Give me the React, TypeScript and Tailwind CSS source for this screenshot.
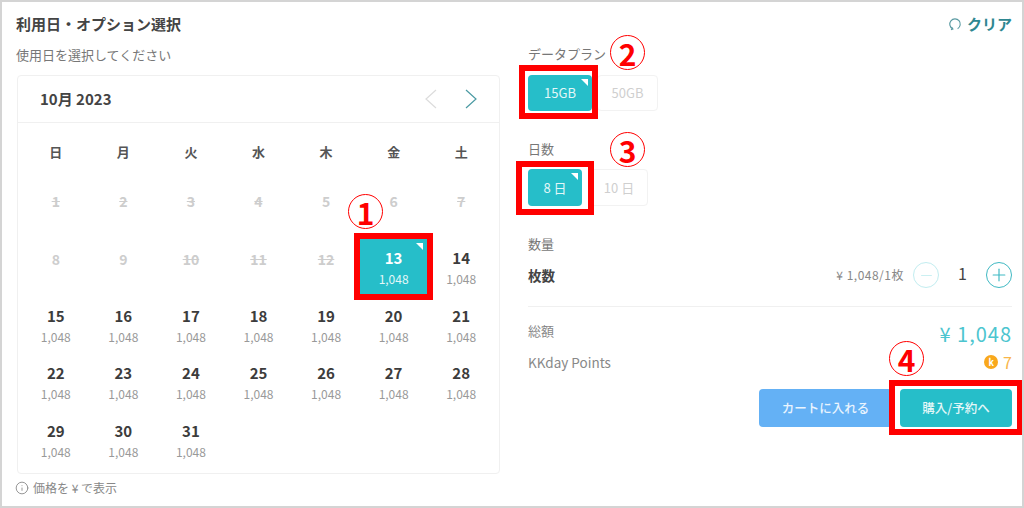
import React from 'react';
import { Info, Minus, Plus } from 'lucide-react';

const weekdays = ['日', '月', '火', '水', '木', '金', '土'];
const disabled = [1, 2, 3, 4, 5, 6, 7, 8, 9, 10, 11, 12];
const strikeDays = [1, 2, 3, 4, 7, 10, 11, 12];
const days = Array.from({ length: 19 }, (_, i) => i + 13);

const Corner = () => (
  <span className="absolute top-[4px] right-[4px] w-0 h-0 border-l-[7px] border-l-transparent border-t-[7px] border-t-white" />
);

const Marker: React.FC<{ n: number; className: string }> = ({ n, className }) => (
  <span className={`absolute w-[35px] h-[35px] rounded-full border border-[#f00] flex items-center justify-center text-[30px] font-bold text-[#f00] leading-none ${className}`}>
    {n}
  </span>
);

const RedBox: React.FC<{ className: string }> = ({ className }) => (
  <span className={`absolute border-[6px] border-[#f00] ${className}`} />
);

const Option: React.FC<{ label: string; active?: boolean; className: string }> = ({ label, active, className }) => (
  <div className={`relative rounded flex items-center justify-center text-[13px] ${active ? 'bg-[#26bec9] text-[#e3f7f8]' : 'border border-[#f2f2f2] text-[#cfcfcf]'} ${className}`}>
    {label}
    {active && <Corner />}
  </div>
);

export default function App() {
  return (
    <div className="relative w-[1024px] h-[508px] overflow-hidden bg-white border-2 border-[#d4d4d4] text-[#3c3c3c] font-['Noto_Sans_CJK_JP','Noto_Sans',sans-serif]">
      <div className="flex pl-[14px] pr-[10px]">
        {/* left: calendar */}
        <div className="w-[484px] shrink-0">
          <h1 className="mt-[12px] h-[20px] leading-[20px] text-[15px] font-bold text-[#444]">利用日・オプション選択</h1>
          <p className="mt-[12px] h-[18px] leading-[18px] text-[13px] text-[#777]">使用日を選択してください</p>
          <div className="mt-[11px] h-[399px] ml-[1px] rounded border border-[#f0f0f0]">
            <div className="h-[47px] flex items-center justify-between pl-[22px] pr-[21px] border-b border-[#f0f0f0]">
              <span className="text-[15px] font-bold text-[#444]">10月 2023</span>
              <div className="flex items-center gap-[28px]">
                <svg viewBox="0 0 13 20" className="w-[13px] h-[20px]" fill="none" stroke="#dcdcdc" strokeWidth="1.2">
                  <path d="M12 1L2 10l10 9" />
                </svg>
                <svg viewBox="0 0 13 20" className="w-[13px] h-[20px]" fill="none" stroke="#4b9aa3" strokeWidth="1.2">
                  <path d="M1 1l10 9-10 9" />
                </svg>
              </div>
            </div>
            <div className="px-[4px] grid grid-cols-7">
              {weekdays.map((d) => (
                <div key={d} className="h-[58.5px] pt-[19px] text-center text-[13px] font-bold text-[#555] leading-[20px]">{d}</div>
              ))}
              {disabled.map((d) => (
                <div key={d} className="h-[57.5px] pt-[9.5px] text-center text-[14px] font-bold leading-[20px] text-[#cdcdcd]">
                  <span className={strikeDays.includes(d) ? 'line-through' : ''}>{d}</span>
                </div>
              ))}
              {days.map((d) => (
                <div key={d} className="h-[57.5px] flex justify-center">
                  <div className={`relative w-[67px] h-[55px] flex flex-col items-center pt-[9px] ${d === 13 ? 'bg-[#26bec9] text-white' : ''}`}>
                    <span className="text-[15px] font-bold leading-[20px]">{d}</span>
                    <span className={`mt-[2px] text-[12px] leading-[18px] ${d === 13 ? 'text-[#e3f7f8]' : 'text-[#999]'}`}>1,048</span>
                    {d === 13 && <Corner />}
                  </div>
                </div>
              ))}
            </div>
          </div>
          <div className="mt-[5px] flex items-center gap-[4px] text-[12px] leading-[18px] text-[#888]">
            <Info className="-ml-[1px] w-[14px] h-[14px]" strokeWidth={1.5} />
            <span>価格を ¥ で表示</span>
          </div>
        </div>

        {/* right: options */}
        <div className="ml-[28px] flex-1 min-w-0 relative">
          <button className="absolute top-[12px] right-0 h-[20px] flex items-center gap-[5px] text-[15px] font-bold text-[#2e8791]">
            <svg viewBox="0 0 16 16" className="w-[14px] h-[14px]" fill="none" stroke="#5a9aa2" strokeWidth="1.3">
              <path d="M5.2 13.4A6 6 0 1 1 11 13.3" />
              <path d="M4 11.6l1.6 2.2-2.2 .8" />
            </svg>
            クリア
          </button>
          <p className="mt-[43px] h-[18px] leading-[18px] text-[13px] text-[#777]">データプラン</p>
          <div className="mt-[12px] flex gap-[5px]">
            <Option label="15GB" active className="w-[64px] h-[36px]" />
            <Option label="50GB" className="w-[61px] h-[36px]" />
          </div>
          <p className="mt-[29px] h-[18px] leading-[18px] text-[13px] text-[#777]">日数</p>
          <div className="mt-[11px] flex gap-[8px]">
            <Option label="8 日" active className="w-[54px] h-[37px]" />
            <Option label="10 日" className="w-[58px] h-[37px]" />
          </div>
          <p className="mt-[29px] h-[18px] leading-[18px] text-[13px] text-[#777]">数量</p>
          <div className="mt-[8px] h-[28px] flex items-center">
            <span className="text-[13.5px] font-bold text-[#444]">枚数</span>
            <div className="ml-auto flex items-center">
              <span className="text-[12px] tracking-[0.5px] text-[#888]">¥ 1,048/1枚</span>
              <span className="ml-[9px] w-[26px] h-[26px] rounded-full border border-[#c2edf0] flex items-center justify-center">
                <Minus className="w-[17px] h-[17px] text-[#c2edf0]" strokeWidth={1.2} />
              </span>
              <span className="w-[47px] text-center text-[16px] text-[#444] -mt-[4px]">1</span>
              <span className="w-[26px] h-[26px] rounded-full border-[1.5px] border-[#3fb9c3] flex items-center justify-center">
                <Plus className="w-[20px] h-[20px] text-[#3fb9c3]" strokeWidth={1.4} />
              </span>
            </div>
          </div>
          <div className="mt-[17px] border-t border-[#f0f0f0]" />
          <div className="mt-[15px] h-[24px] flex items-start">
            <span className="text-[13px] leading-[18px] text-[#888]">総額</span>
            <span className="ml-auto text-[20px] leading-[24px] tracking-[1px] text-[#4cc5cf]">¥ 1,048</span>
          </div>
          <div className="mt-[7px] h-[18px] flex items-center">
            <span className="text-[13.5px] text-[#888]">KKday Points</span>
            <span className="ml-auto flex items-center gap-[5px] text-[16px] text-[#f9b64a]">
              <span className="w-[14px] h-[14px] rounded-full bg-[#f9a81c] text-white text-[9px] font-bold flex items-center justify-center leading-none">k</span>
              7
            </span>
          </div>
          <div className="mt-[18px] flex justify-end gap-[8px]">
            <button className="w-[133px] h-[38px] rounded bg-[#64b1f5] text-[#e9f4fe] text-[12.5px] font-medium">カートに入れる</button>
            <button className="w-[112px] h-[38px] rounded bg-[#26bec9] text-[#e3f7f8] text-[12.5px] font-medium">購入/予約へ</button>
          </div>
        </div>
      </div>

      {/* annotations */}
      <RedBox className="left-[352px] top-[231px] w-[79px] h-[67px]" />
      <RedBox className="left-[517px] top-[63px] w-[79px] h-[54px]" />
      <RedBox className="left-[514px] top-[159px] w-[78px] h-[54px]" />
      <RedBox className="left-[887px] top-[378px] w-[134px] h-[55px]" />
      <Marker n={1} className="left-[346px] top-[192px]" />
      <Marker n={2} className="left-[608px] top-[33px]" />
      <Marker n={3} className="left-[608px] top-[130px]" />
      <Marker n={4} className="left-[887px] top-[339px]" />
    </div>
  );
}
